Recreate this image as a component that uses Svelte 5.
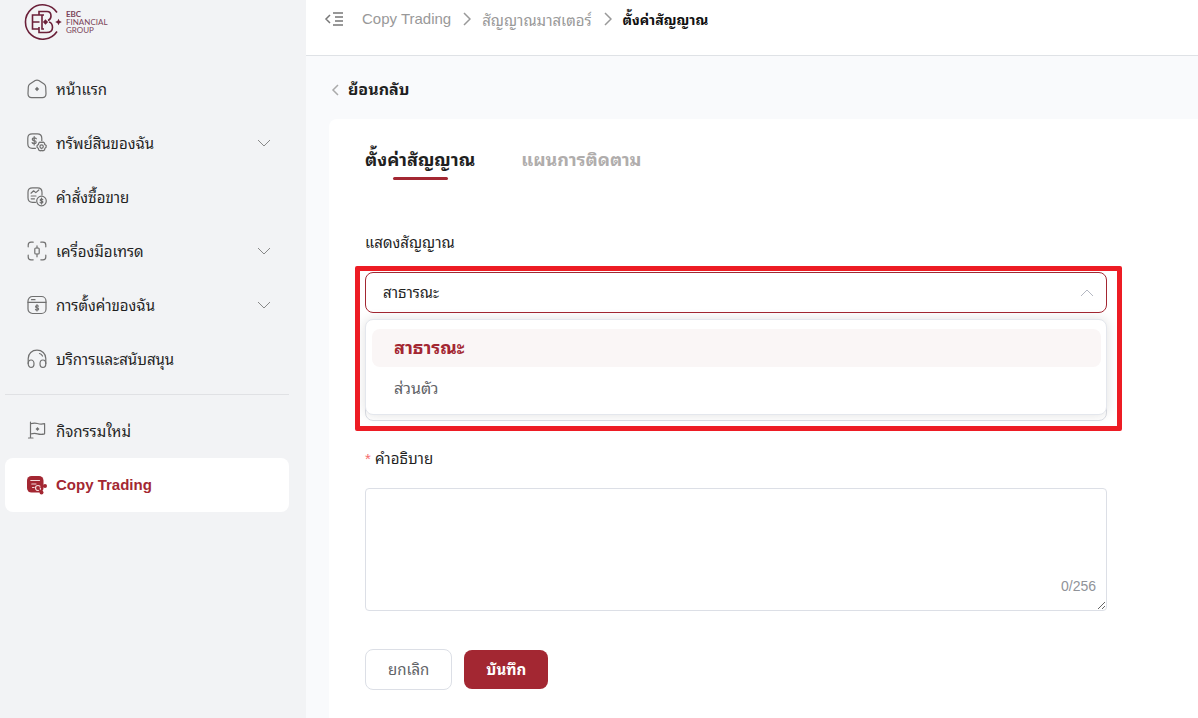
<script>
  const menu = [
    { label: "หน้าแรก", icon: "home" },
    { label: "ทรัพย์สินของฉัน", icon: "assets", more: true },
    { label: "คำสั่งซื้อขาย", icon: "orders" },
    { label: "เครื่องมือเทรด", icon: "tools", more: true },
    { label: "การตั้งค่าของฉัน", icon: "settings", more: true },
    { label: "บริการและสนับสนุน", icon: "support" }
  ];
  const extra = [
    { label: "กิจกรรมใหม่", icon: "flag" },
    { label: "Copy Trading", icon: "copy", active: true }
  ];
  const options = ["สาธารณะ", "ส่วนตัว"];
  const limit = 256;

  let visibility = $state(options[0]);
  let open = $state(true);
  let signalName = $state("");
  let description = $state("");

  const choose = option => {
    visibility = option;
    open = false;
  };
</script>

{#snippet icon(name)}
  <svg class="icon" viewBox="0 0 20 20" aria-hidden="true">
    {#if name === "home"}
      <path d="M8.2 1.6 2.9 5.1Q1.4 6.2 1.3 8L1 14.8Q1.1 18.6 4.6 18.7H15.4Q18.9 18.6 19 14.8L18.7 8Q18.6 6.2 17.1 5.1L11.8 1.6Q10 .5 8.2 1.6Z" />
      <path class="solid" d="m10 8.500.5 1 1 .5-1 .5-.5 1-.5-1-1-.5 1-.5Z" />
    {:else if name === "assets"}
      <path d="M8.500 15.300H5.300Q.8 15.300.8 10.800V5.200Q.8.800 5.300.800H10.300Q14.800.800 14.800 5.200V8" />
      <path d="M9.300 5.800Q8.900 4.800 7.200 4.800 5.300 4.800 5.300 6.200 5.300 7.400 7.200 7.700 9.200 8 9.200 9.300 9.200 10.600 7.200 10.600 5.400 10.600 5.100 9.500M7.200 3.500V11.900" />
      <path d="m11.800 10 1.200-.9 1.600.4 1.500-.4 1.300.9.400 1.500 1.400 1-.1 1.800-1.200 1.100-.4 1.600-1.400.8-1.500-.4-1.600.4-1.300-.9-.4-1.500-1.300-1.100.1-1.700 1.300-1Z" />
      <circle cx="14.600" cy="13.600" r="1.700" />
    {:else if name === "orders"}
      <path d="M8.500 15.300H5.500Q1 15.300 1 10.800V5.200Q1 .8 5.500.8H10.500Q15 .8 15 5.200V8M4 6.200 6.600 3.800 8.800 5.600 11.800 3M4.200 9H9M4.200 11.800H7.500" />
      <circle cx="14.500" cy="14" r="4.800" />
      <path d="M15.800 12.700Q15.500 12 14.500 12 13.200 12 13.200 13 13.200 13.800 14.500 14 15.900 14.200 15.900 15.100 15.900 16 14.500 16 13.300 16 13.100 15.300M14.500 11.200V16.900" />
    {:else if name === "tools"}
      <path d="M1.200 5.800V4Q1.200 1.200 4 1.200H6.200M13.800 1.200H16Q18.800 1.200 18.800 4V5.800M18.800 14.200V16Q18.800 18.800 16 18.800H13.800M6.200 18.800H4Q1.200 18.800 1.200 16V14.200M10 4.800V7M10 13V15.800" />
      <rect x="7.800" y="7" width="4.400" height="6" rx="1" />
    {:else if name === "settings"}
      <rect x="1" y="1.500" width="18" height="17" rx="4.500" />
      <path d="M1 7.300H19M4.500 4.700H8M11.400 11.200Q11.200 10.500 10 10.500 8.600 10.500 8.600 11.600 8.600 12.500 10 12.800 11.600 13 11.600 14.100 11.600 15.200 10 15.200 8.700 15.200 8.500 14.400M10 9.700V16" />
    {:else if name === "support"}
      <path d="M1.200 14.500V9.500C1.200 4.500 5 1.200 10 1.200S18.800 4.500 18.800 9.500V14.500M12.500 4.500Q14.500 5.200 15.500 7" />
      <ellipse cx="4.100" cy="14.700" rx="2.900" ry="3.700" />
      <ellipse cx="15.900" cy="14.700" rx="2.900" ry="3.700" />
    {:else if name === "flag"}
      <path d="M3.500 1.200V17M1.500 17H6M3.500 2.800Q7.500 1.500 10.500 2.500 14 3.500 17.600 2.600V12.800Q14 13.800 10.500 12.800 7.500 12 3.500 13" />
      <path class="solid" d="m10.500 6.800.4.8.8.4-.8.4-.4.8-.4-.8-.8-.4.8-.4Z" />
    {:else if name === "copy"}
      <rect class="solid" x="0" y="1" width="16.500" height="16.500" rx="4.500" />
      <path class="light" d="M3.800 5.500H12.500M4.800 9H9M5.500 12.500H8" />
      <circle class="solid" cx="11" cy="13" r="3.500" />
      <circle class="light" cx="11" cy="13" r="2.500" />
      <path d="m12 14.500 2.300 2.800M13.500 12.200 17.800 11" />
      <circle class="solid" cx="18" cy="11" r="2" />
      <circle class="solid" cx="14.500" cy="17.500" r="2" />
    {/if}
  </svg>
{/snippet}

{#snippet item(entry)}
  <a href="#{entry.icon}" class="Sidebar-item" class:active={entry.active}>
    {@render icon(entry.icon)}
    <span>{entry.label}</span>
    {#if entry.more}
      <svg class="chevron" viewBox="0 0 14 8" aria-hidden="true"><path d="m1 1 6 6 6-6" /></svg>
    {/if}
  </a>
{/snippet}

<div class="Page">
  <aside class="Sidebar">
    <div class="Logo">
      <svg viewBox="0 0 38 38" aria-hidden="true">
        <path d="M33.500 9.500A17.200 17.200 0 1 0 33.500 28.500" />
        <path d="M15.500 24V29.500H23Q29 29.500 29 24.500 29 20 25.500 19M15.500 12V8.500H23.500Q27.500 8.500 27.500 13 27.500 16.500 24.500 17.500M15.500 26H9V12H18.500V26H20.500M9 19H16M18.500 12H20.500" />
        <path class="dot" d="m22 17.500 1.500 1.500-1.500 1.500-1.500-1.500Z" />
        <path class="dot" d="m35 17.500.5 1 1 .5-1 .5-.5 1-.5-1-1-.5 1-.5Z" />
      </svg>
      <div class="Logo-text">EBC<br />FINANCIAL<br />GROUP</div>
    </div>
    <nav>
      {#each menu as entry}
        {@render item(entry)}
      {/each}
      <hr />
      {#each extra as entry}
        {@render item(entry)}
      {/each}
    </nav>
  </aside>

  <main class="Main">
    <header class="Topbar">
      <button type="button" class="Topbar-fold" aria-label="เมนู">
        <svg viewBox="0 0 20 16" aria-hidden="true">
          <path d="M6 4 2 8l4 4M9 2H19M11 6H19M11 10H19M9 14H19" />
        </svg>
      </button>
      <a href="#copy">Copy Trading</a>
      <svg class="separator" viewBox="0 0 8 14" aria-hidden="true"><path d="m1 1 6 6-6 6" /></svg>
      <a href="#master">สัญญาณมาสเตอร์</a>
      <svg class="separator" viewBox="0 0 8 14" aria-hidden="true"><path d="m1 1 6 6-6 6" /></svg>
      <strong>ตั้งค่าสัญญาณ</strong>
    </header>

    <a href="#back" class="Back">
      <svg viewBox="0 0 8 12" aria-hidden="true"><path d="M7 1 2 6l5 5" /></svg>
      ย้อนกลับ
    </a>

    <section class="Card">
      <div class="Tabs">
        <button type="button" class="active">ตั้งค่าสัญญาณ</button>
        <button type="button">แผนการติดตาม</button>
      </div>

      <form onsubmit={e => e.preventDefault()}>
        <label class="Label" for="visibility">แสดงสัญญาณ</label>
        <div class="Picker">
          <select
            id="visibility"
            class="field"
            bind:value={visibility}
            onmousedown={e => {
              e.preventDefault();
              open = !open;
            }}>
            {#each options as option}
              <option>{option}</option>
            {/each}
          </select>
          <svg class="Picker-arrow" viewBox="0 0 14 8" aria-hidden="true"><path d="m1 7 6-6 6 6" /></svg>
          <input class="field" type="text" aria-label="ชื่อสัญญาณ" bind:value={signalName} />
          {#if open}
            <div class="Picker-list">
              {#each options as option}
                <button
                  type="button"
                  class:selected={option === visibility}
                  onclick={() => choose(option)}>{option}</button>
              {/each}
            </div>
          {/if}
          <div class="Picker-frame"></div>
        </div>

        <label class="Label" for="description"><i>*</i> คำอธิบาย</label>
        <div class="Description">
          <textarea id="description" maxlength={limit} bind:value={description}></textarea>
          <span>{description.length}/{limit}</span>
        </div>

        <div class="Actions">
          <button type="button">ยกเลิก</button>
          <button type="submit" class="primary">บันทึก</button>
        </div>
      </form>
    </section>
  </main>
</div>

<style>
  :global(body) {
    font-family: "Liberation Sans", "Noto Sans Thai Looped", "Noto Sans Thai", "Noto Sans", sans-serif;
    font-size: 15px;
    color: #1f1f1f;
  }
  * {
    box-sizing: border-box;
  }
  a {
    color: inherit;
    text-decoration: none;
  }
  button,
  select,
  input,
  textarea {
    font: inherit;
    color: inherit;
    outline: none;
  }
  button {
    border: none;
    background: none;
    padding: 0;
    cursor: pointer;
  }
  svg {
    fill: none;
    stroke: currentColor;
    flex: none;
  }

  .Page {
    display: flex;
    min-height: 100vh;
    background: #f9fafc;
  }

  .Sidebar {
    flex: 0 0 306px;
    padding: 3px 17px 0 5px;
    background: #f2f3f5;
  }
  .Logo {
    display: flex;
    align-items: center;
    gap: 4px;
    height: 38px;
    margin: 0 0 21px 18px;
    color: #6b2039;
  }
  .Logo svg {
    width: 39px;
    height: 38px;
    stroke-width: 1.6;
  }
  .Logo .dot {
    fill: currentColor;
  }
  .Logo-text {
    font-family: Lato, sans-serif;
    font-size: 8px;
    line-height: 8px;
    color: #7a4458;
  }
  .Logo-text::first-line {
    font-weight: bold;
  }
  .Sidebar-item {
    display: flex;
    align-items: center;
    gap: 9px;
    height: 54px;
    padding: 0 18px 0 22px;
    border-radius: 8px;
  }
  .Sidebar-item span {
    padding-bottom: 2px;
  }
  .Sidebar-item.active {
    background: #fff;
    color: #a32732;
    font-weight: bold;
  }
  .icon {
    width: 20px;
    height: 20px;
    stroke: #707070;
    stroke-width: 1.2;
    stroke-linecap: round;
    stroke-linejoin: round;
  }
  .icon .solid {
    fill: #707070;
  }
  .active .icon {
    stroke: #a32732;
  }
  .active .icon .solid {
    fill: #a32732;
    stroke: none;
  }
  .active .icon .light {
    stroke: #f3d9db;
  }
  .chevron {
    width: 14px;
    height: 8px;
    margin-left: auto;
    stroke: #888;
  }
  hr {
    height: 1px;
    margin: 8px 0 9px;
    border: none;
    background: #e0e1e4;
  }

  .Main {
    flex: 1;
    min-width: 0;
    display: flex;
    flex-direction: column;
  }
  .Topbar {
    display: flex;
    align-items: center;
    height: 56px;
    padding: 0 18px 18px;
    border-bottom: 1px solid #dfe2e6;
    background: #fff;
    color: #999;
  }
  .Topbar strong {
    font-size: 14px;
    color: #111;
  }
  .Topbar-fold {
    margin-right: 18px;
    color: #777;
  }
  .Topbar-fold svg {
    display: block;
    width: 20px;
    height: 16px;
    stroke-width: 1.5;
  }
  .separator {
    width: 8px;
    height: 14px;
    margin: 0 11px 0 12px;
    stroke-width: 1.5;
  }
  .Back {
    display: flex;
    align-items: center;
    gap: 9px;
    height: 63px;
    padding: 4px 0 0 25px;
    font-size: 16px;
    line-height: 22px;
    font-weight: bold;
  }
  .Back svg {
    width: 8px;
    height: 12px;
    stroke: #aaa;
    stroke-width: 1.5;
  }

  .Card {
    flex: 1;
    margin-left: 23px;
    padding: 25px 36px 28px;
    border-radius: 8px 0 0 0;
    background: #fff;
  }
  .Tabs {
    display: flex;
    gap: 46px;
    margin-bottom: 52px;
  }
  .Tabs button {
    position: relative;
    height: 36px;
    padding-bottom: 8px;
    font-size: 18px;
    font-weight: bold;
    color: #b0adac;
  }
  .Tabs .active {
    color: #1f1f1f;
  }
  .Tabs .active::after {
    content: "";
    position: absolute;
    bottom: 0;
    left: 25%;
    width: 50%;
    height: 3px;
    border-radius: 2px;
    background: #a32732;
  }

  form {
    max-width: 742px;
  }
  .Label {
    display: block;
    height: 40px;
    line-height: 22px;
  }
  .Label i {
    color: #f56c6c;
    font-style: normal;
  }
  .Picker {
    position: relative;
    margin-bottom: 27px;
  }
  .field {
    display: block;
    width: 100%;
    height: 41px;
    padding: 0 17px;
    border: 1px solid #dcdfe6;
    border-radius: 8px;
    background: #fff;
    appearance: none;
  }
  select.field {
    margin-bottom: 67px;
    border-color: #a32732;
  }
  .Picker-arrow {
    position: absolute;
    top: 17px;
    right: 13px;
    width: 14px;
    height: 8px;
    stroke: #b4b8c2;
    pointer-events: none;
  }
  .Picker-list {
    position: absolute;
    top: 47px;
    left: 0;
    right: 0;
    display: grid;
    gap: 3px;
    padding: 9px 5px 6px 6px;
    border: 1px solid #e4e7ed;
    border-radius: 8px;
    background: #fff;
    box-shadow: 0 0 12px rgba(0, 0, 0, 0.12);
  }
  .Picker-list button {
    height: 38px;
    padding: 0 22px 4px;
    border-radius: 8px;
    font-size: 16px;
    text-align: left;
    color: #606266;
  }
  .Picker-list .selected {
    background: #faf6f6;
    color: #a32732;
    font-size: 18px;
    font-weight: bold;
  }
  .Picker-frame {
    position: absolute;
    inset: -6px -15px -10px -10px;
    border: 5px solid #ed1c24;
    border-radius: 2px;
    pointer-events: none;
  }
  .Description {
    position: relative;
    margin-bottom: 38px;
  }
  textarea {
    display: block;
    width: 100%;
    height: 123px;
    padding: 8px 16px;
    border: 1px solid #dcdfe6;
    border-radius: 4px;
    resize: vertical;
  }
  .Description span {
    position: absolute;
    right: 11px;
    bottom: 17px;
    font-size: 14px;
    color: #909399;
  }
  .Actions {
    display: flex;
    align-items: center;
    gap: 12px;
  }
  .Actions button {
    height: 41px;
    padding: 0 22px 4px;
    border: 1px solid #dcdfe6;
    border-radius: 8px;
    color: #606266;
  }
  .Actions .primary {
    height: 39px;
    border: none;
    background: #a32732;
    color: #fff;
    font-weight: bold;
  }
</style>
